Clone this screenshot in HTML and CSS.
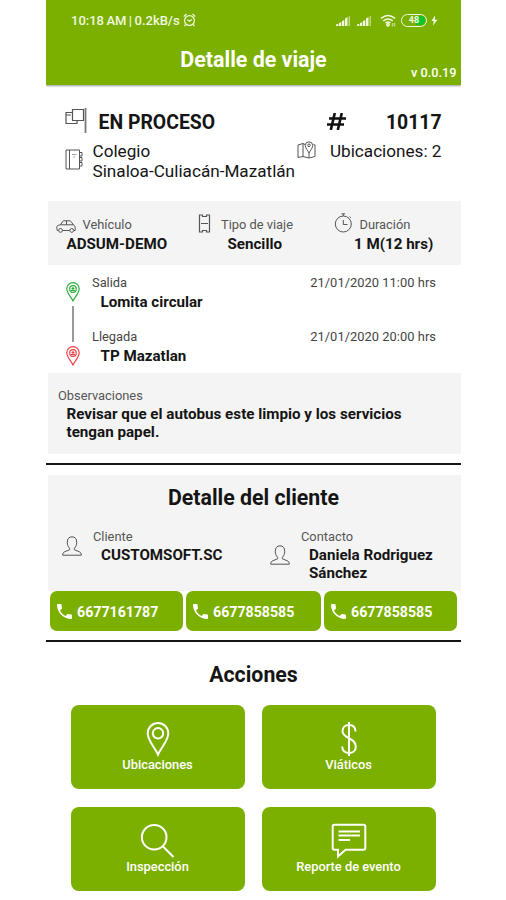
FILE: index.html
```html
<!DOCTYPE html>
<html lang="es">
<head>
<meta charset="utf-8">
<title>Detalle de viaje</title>
<link rel="stylesheet" href="styles.css">
</head>
<body>
<svg class="defs" width="0" height="0">
  <symbol id="user" viewBox="0 0 20 20"><path d="M7.600 12.200C6 10.800 5.300 8.800 5.300 6.300 5.300 2.700 7 .8 10 .8s4.700 1.900 4.700 5.500c0 2.500-.7 4.500-2.300 5.900v1.600l5 2c1.200.5 1.900 1.700 1.900 3.400H.7c0-1.700.7-2.900 1.900-3.400l5-2z"/></symbol>
  <symbol id="phone" viewBox="3 3 18 18"><path d="M6.620 10.790c1.440 2.830 3.760 5.140 6.590 6.590l2.200-2.200c.27-.27.67-.36 1.020-.24 1.120.37 2.330.57 3.570.57.550 0 1 .450 1 1V20c0 .550-.450 1-1 1-9.390 0-17-7.610-17-17 0-.550.450-1 1-1h3.500c.550 0 1 .450 1 1 0 1.250.2 2.450.57 3.570.110.350.030.740-.250 1.020l-2.200 2.200z"/></symbol>
  <symbol id="stop" viewBox="0 0 14 20"><path d="M7 19C5 15 .8 11 .8 6.800a6.200 6.200 0 0 1 12.400 0C13.200 11 9 15 7 19z"/><circle cx="7" cy="7" r="3.300"/><path d="M5 8.500h4M7 5v3.500M5.500 6.500h3"/></symbol>
  <symbol id="signal" viewBox="0 0 15 11"><path d="M0 11V9.500L2.300 8.700V11zM3 11V8l2.300-.9V11zM6 11V6l2.300-1V11zM9 11V3.500l2.500-1.500V11z"/><path class="faint" d="M12.500 11V1.500L14 .5V11z"/></symbol>
</svg>
<div class="phone">
  <header class="header">
    <div class="status">
      <span class="clock">10:18 AM | 0.2kB/s</span>
      <svg class="alarm" viewBox="0 0 13 14"><circle cx="6.500" cy="7.500" r="4.900"/><path d="M.8 3.500L3.500 1M12.200 3.500L9.500 1M2.800 11.500L1.500 13M10.200 11.500l1.300 1.500M4.300 6.700l2.200 1.600 2.400-1.700"/></svg>
      <svg class="signal"><use href="#signal"/></svg>
      <svg class="signal second"><use href="#signal"/></svg>
      <svg class="wifi" viewBox="0 0 17 13"><path d="M1 4.300q7-5.600 14 0M3.300 6.800q4.700-3.700 9.400 0M5.500 9q2.500-2 5 0"/><circle cx="8" cy="10.800" r="1.200"/><path class="faint" d="M12.500 9v3.500M14.500 9v3.500"/></svg>
      <span class="battery"><span class="level">48</span></span>
      <svg class="bolt" viewBox="0 0 8 12"><path d="M4.800 0L.5 6.700h2.700L2 12l5.500-7H4.400z"/></svg>
    </div>
    <h1 class="title">Detalle de viaje</h1>
    <div class="version">v 0.0.19</div>
  </header>

  <section class="summary">
    <div class="state">
      <svg class="ico flag" viewBox="0 0 23 26"><path d="M7.500 4.500H1V15.500H12V12M1 7h5"/><path d="M7.500 1.500H18.500V12.500H7.500z"/><path class="pole" d="M20.500 0V25"/></svg>
      <strong class="state-name">EN PROCESO</strong>
      <svg class="hash" viewBox="0 0 19 17"><path d="M7.800 0L3.800 17M14.800 0L10.800 17M2 5.500H19M0 11.500H17"/></svg>
      <strong class="folio">10117</strong>
    </div>
    <div class="route">
      <svg class="ico book" viewBox="0 0 18 21"><path d="M1 1H14.500V20H1zM4.500 1V20M14.500 3.500H17V7H14.500M14.500 8.500H17V12H14.500M14.500 13.500H17V17H14.500"/><path class="faint" d="M7 5.500h4.500M8 8h2"/></svg>
      <p class="route-name">Colegio<br>Sinaloa-Culiacán-Mazatlán</p>
      <svg class="ico map" viewBox="0 0 19 18"><path d="M8 3.500L6 2.500 1 4V16.500L6 15.500 12 17 18 15.500V4L16.500 3.500M6 2.500V15.500M12 12V17"/><path d="M12 12C11 9.500 8.300 7.500 8.300 4.500a3.700 3.700 0 0 1 7.400 0C15.700 7.500 13 9.500 12 12z"/><circle cx="12" cy="4.300" r="1.300"/></svg>
      <span class="stops">Ubicaciones: 2</span>
    </div>
  </section>

  <section class="facts">
    <div class="fact vehicle">
      <svg class="ico car" viewBox="0 0 20 13"><path d="M2.500 10.500H1.200Q.7 8 .8 6.500 2 5 4.500 4.800L6.500 1.700Q7 .8 8 .8h5.500q1 0 1.600.8L17.500 5q1.700.8 1.700 2.500v3H17.800M6.500 10.500h7.200M4.500 4.800H17.500M10.500 .8v4"/><circle cx="4.500" cy="10.400" r="1.900"/><circle cx="15.700" cy="10.400" r="1.900"/></svg>
      <span class="label">Vehículo</span>
      <strong class="value">ADSUM-DEMO</strong>
    </div>
    <div class="fact kind">
      <svg class="ico seat" viewBox="0 0 13 19"><path d="M1.500 1H4.500V2.500H8.500V1H11.500V18H8.500V16.500H4.500V18H1.500zM3 9.500H10"/></svg>
      <span class="label">Tipo de viaje</span>
      <strong class="value">Sencillo</strong>
    </div>
    <div class="fact time">
      <svg class="ico watch" viewBox="0 0 19 20"><circle cx="9.300" cy="11" r="8"/><path d="M9.300 3V1M7.500 .8h3.600M15.500 3.500l1.300 1.300M9.300 7V11.500H13.500"/></svg>
      <span class="label">Duración</span>
      <strong class="value">1 M(12 hrs)</strong>
    </div>
  </section>

  <section class="trip">
    <div class="track">
      <svg class="stop start"><use href="#stop"/></svg>
      <span class="track-line"></span>
      <svg class="stop end"><use href="#stop"/></svg>
    </div>
    <div class="legs">
      <div class="leg"><span class="label">Salida</span><time class="label">21/01/2020 11:00 hrs</time><strong class="value">Lomita circular</strong></div>
      <div class="leg"><span class="label">Llegada</span><time class="label">21/01/2020 20:00 hrs</time><strong class="value">TP Mazatlan</strong></div>
    </div>
  </section>

  <section class="notes">
    <span class="label">Observaciones</span>
    <p class="notes-text">Revisar que el autobus este limpio y los servicios<br>tengan papel.</p>
  </section>

  <hr class="rule">

  <section class="client">
    <h2 class="heading">Detalle del cliente</h2>
    <div class="people">
      <svg class="ico user"><use href="#user"/></svg>
      <div class="person"><span class="label">Cliente</span><strong class="value">CUSTOMSOFT.SC</strong></div>
      <svg class="ico user contact"><use href="#user"/></svg>
      <div class="person"><span class="label">Contacto</span><strong class="value">Daniela Rodriguez<br>Sánchez</strong></div>
    </div>
  </section>
  <div class="calls">
    <button class="call"><svg class="handset"><use href="#phone"/></svg>6677161787</button>
    <button class="call"><svg class="handset"><use href="#phone"/></svg>6677858585</button>
    <button class="call"><svg class="handset"><use href="#phone"/></svg>6677858585</button>
  </div>

  <hr class="rule">

  <section class="actions">
    <h2 class="heading">Acciones</h2>
    <div class="tiles">
      <button class="tile"><svg class="glyph" viewBox="0 0 36 36"><path d="M18 33.500C15 26.500 7.700 20 7.700 12.300a10.300 10.300 0 0 1 20.600 0C28.300 20 21 26.500 18 33.500z"/><circle cx="18" cy="12.300" r="5.200"/></svg>Ubicaciones</button>
      <button class="tile"><svg class="glyph" viewBox="0 0 36 36"><path d="M18 1V35M24.500 10.500C24.500 6 21.500 4 18 4S11.500 6 11.500 10.300C11.500 18 24.800 16.500 24.800 25.500 24.800 30 21.500 32 18 32S11.200 30 11.200 25.500"/></svg>Viáticos</button>
      <button class="tile"><svg class="glyph" viewBox="0 0 36 36"><circle cx="14.200" cy="14.200" r="12.300"/><path d="M23 23.500L33.500 34"/></svg>Inspección</button>
      <button class="tile"><svg class="glyph" viewBox="0 0 36 36"><path d="M3.500 1.800H32.500Q34.300 1.800 34.300 3.600V25Q34.300 26.800 32.500 26.800H14.500L7 33.500V26.800H3.500Q1.700 26.800 1.700 25V3.600Q1.700 1.800 3.500 1.800zM7.500 8.500H29M7.500 12.500H29M7.500 17H19"/></svg>Reporte de evento</button>
    </div>
  </section>
</div>
</body>
</html>
```
FILE: styles.css
```css
* { box-sizing: border-box; }
body { margin: 0; background: #fff; color: #151515; font-family: Roboto, sans-serif; }
h1, h2, p { margin: 0; }
svg { display: block; flex: none; fill: none; stroke: currentColor; }
.defs { position: absolute; }
button { border: 0; padding: 0; color: #fff; background: #7cb000; font-family: inherit; }
.phone { width: 415px; height: 900px; margin-left: 46px; overflow: hidden; }

.header { height: 85px; padding-top: 10px; color: #fff; background: #7cb000; box-shadow: 0 1px 2px #0006; }
.status { display: flex; align-items: center; height: 20px; padding-left: 25px; color: #f0f8e0; }
.clock { width: 112px; font-size: 13px; font-weight: 500; word-spacing: -.8px; white-space: nowrap; }
.alarm { width: 13px; height: 14px; stroke-width: 1.200; }
.signal { width: 15px; height: 11px; margin-left: 140px; fill: currentColor; stroke: none; }
.signal.second { margin-left: 6px; }
.faint { opacity: .55; }
.wifi { width: 17px; height: 13px; margin-left: 8px; stroke-width: 1.500; }
.battery { width: 26px; height: 13px; margin-left: 4px; padding: 1px; border: 1.500px solid #f0f8e0; border-radius: 7px; }
.level { display: block; height: 9px; border-radius: 4px; background: linear-gradient(90deg, #7cb000 58%, #0cc52c 58%); font-size: 9px; line-height: 9px; font-weight: 700; text-align: center; }
.bolt { width: 7px; height: 11px; margin-left: 4px; fill: currentColor; stroke: none; }
.title { margin-top: 16px; font-size: 21.400px; line-height: 27px; text-align: center; }
.version { margin-top: -8px; padding-right: 4.500px; font-size: 12.750px; line-height: 16px; font-weight: 500; text-align: right; }

.ico { color: #555; stroke-width: 1; }
.summary { height: 116px; padding: 27px 19.500px 0 19px; }
.state, .route { display: flex; }
.state { height: 20px; font-size: 19.400px; line-height: 21px; }
.flag { width: 23px; height: 26px; margin-top: -4px; stroke-width: 1.200; }
.pole { stroke: #777; stroke-width: 1.800; }
.state-name { width: 229px; padding-left: 10.500px; }
.hash { width: 19px; height: 17px; margin: 1px 0 0 10px; stroke: #111; stroke-width: 2.600; }
.folio { flex: 1; text-align: right; }
.route { margin-top: 9px; font-size: 17.150px; line-height: 20px; }
.book { width: 18px; height: 21px; margin-top: 8px; }
.route-name { width: 214px; padding-left: 9.500px; white-space: nowrap; }
.map { width: 19px; height: 18px; }
.stops { flex: 1; text-align: right; white-space: nowrap; }

.label { font-size: 12.850px; line-height: 18px; color: #555; white-space: nowrap; }
.value { font-size: 15.150px; line-height: 18px; font-weight: 700; white-space: nowrap; }
.facts { display: flex; height: 64px; margin-left: 2px; padding: 15px 0 0 8px; background: #f4f4f4; }
.fact { display: grid; align-content: start; grid-template-rows: 19px 18px; }
.fact .value { grid-column: 1 / -1; }
.vehicle { width: 142px; grid-template-columns: 26.500px 1fr; }
.vehicle .value { padding-left: 10.500px; }
.kind { width: 136px; grid-template-columns: 23px 1fr; }
.kind .value { padding-left: 29.500px; }
.time { grid-template-columns: 25.500px 1fr; }
.time .value { padding-left: 20px; }
.car { width: 20px; height: 13px; margin-top: 4px; }
.seat { width: 13px; height: 19px; margin-top: -2px; stroke-width: 1.200; }
.watch { width: 19px; height: 20px; margin-top: -3px; }

.trip { display: flex; height: 108px; padding: 9px 25px 0 20px; }
.track { display: flex; flex-direction: column; align-items: center; width: 14px; padding-top: 8px; }
.stop { width: 14px; height: 20px; stroke-width: 1.200; }
.start { color: #2fae3b; }
.end { color: #ee4549; }
.track-line { width: 2px; height: 36px; margin: 4px 0; background: #999; }
.legs { flex: 1; padding-left: 12px; }
.leg { display: grid; grid-template-columns: 1fr auto; grid-template-rows: 19px 18px; height: 54px; }
.leg .value { padding-left: 8.500px; }
.leg .label { color: #444; }
.leg time { letter-spacing: .05px; }

.notes { height: 81px; margin-left: 2px; padding: 14px 10px 0; background: #f4f4f4; }
.notes .label { display: block; }
.notes-text { padding-left: 8.500px; font-size: 15.200px; line-height: 18px; font-weight: 700; white-space: nowrap; }
.rule { height: 2px; margin: 9px 0 10px; border: 0; background: #151515; }

.heading { font-size: 21.300px; line-height: 26px; text-align: center; }
.client { height: 116px; margin-left: 2px; padding-top: 10px; background: #f4f4f4; }
.client .heading { padding-right: 2px; }
.people { display: flex; padding: 17px 0 0 14px; }
.user { width: 20px; height: 20px; margin-top: 8px; }
.contact { margin-top: 17px; }
.person { display: flex; flex: none; flex-direction: column; width: 188px; padding-left: 11px; }
.contact + .person { width: 150px; }
.person .value { padding-left: 8px; }
.calls { display: grid; grid-template-columns: 133px 135px 133px; gap: 3px; padding: 0 4px; height: 40px; }
.call { display: flex; align-items: center; padding: 1px 0 0 7px; border-radius: 7px; font-size: 14.200px; font-weight: 700; }
.handset { width: 15px; height: 15px; margin-right: 5px; fill: currentColor; stroke: none; }

.actions { padding-top: 10px; }
.tiles { display: grid; grid-template-columns: 174px 174px; grid-auto-rows: 84px; gap: 17.500px 17px; padding: 17px 0 0 24.500px; }
.tile { display: flex; flex-direction: column; align-items: center; padding-top: 16px; border-radius: 8px; font-size: 12.850px; line-height: 16px; font-weight: 500; }
.glyph { width: 36px; height: 36px; stroke-width: 2; }
```
